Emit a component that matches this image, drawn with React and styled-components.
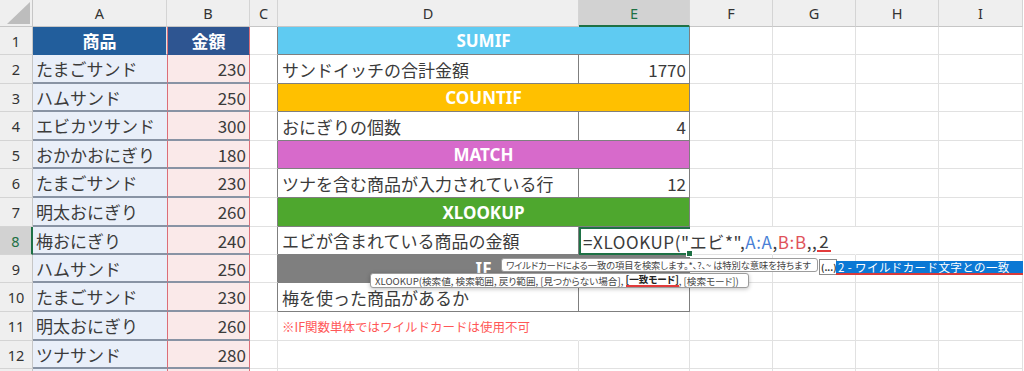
import React from 'react';
import styled, { createGlobalStyle } from 'styled-components';

const GlobalStyle = createGlobalStyle`
  html, body {
    margin: 0;
    padding: 0;
    background: #fff;
  }
  body {
    font-family: "Noto Sans CJK JP", "Noto Sans", sans-serif;
  }
`;

const COLS = ['A', 'B', 'C', 'D', 'E', 'F', 'G', 'H', 'I'];
const ROW_HEIGHTS = [28, 29, 28, 29, 28, 29, 29, 28, 28, 29, 29, 28];
const GREEN = '#1e7145';
const TABLE_LINE = '#7f7f7f';

const items = [
  ['たまごサンド', 230],
  ['ハムサンド', 250],
  ['エビカツサンド', 300],
  ['おかかおにぎり', 180],
  ['たまごサンド', 230],
  ['明太おにぎり', 260],
  ['梅おにぎり', 240],
  ['ハムサンド', 250],
  ['たまごサンド', 230],
  ['明太おにぎり', 260],
  ['ツナサンド', 280],
];

// D:E の表、行番号ごと
const table = {
  1: { head: 'SUMIF', bg: '#5fcbf2' },
  2: { label: 'サンドイッチの合計金額', value: '1770' },
  3: { head: 'COUNTIF', bg: '#ffc000' },
  4: { label: 'おにぎりの個数', value: '4' },
  5: { head: 'MATCH', bg: '#d76acb' },
  6: { label: 'ツナを含む商品が入力されている行', value: '12' },
  7: { head: 'XLOOKUP', bg: '#4ea72e' },
  8: { label: 'エビが含まれている商品の金額', edit: true },
  9: { head: 'IF', bg: '#7f7f7f' },
  10: { label: '梅を使った商品があるか', value: '' },
  11: { note: '※IF関数単体ではワイルドカードは使用不可' },
};

const Sheet = styled.div`
  position: relative;
  width: 1024px;
  height: 371px;
  overflow: hidden;
  display: grid;
  grid-template-columns: 33px 134px 83px 28px 301px 111px 83px 83px 83px 84px;
  grid-template-rows: 27px ${ROW_HEIGHTS.map((h) => `${h}px`).join(' ')} 20px;
  color: #3b3b3b;
`;

const Corner = styled.div`
  box-sizing: border-box;
  background: #efefef;
  border-right: 1px solid #c6c6c6;
  border-bottom: 1px solid #c6c6c6;

  svg {
    display: block;
  }
`;

const ColHead = styled.div`
  box-sizing: border-box;
  display: flex;
  align-items: center;
  justify-content: center;
  background: ${(p) => (p.$active ? '#d2d2d2' : '#efefef')};
  color: ${(p) => (p.$active ? GREEN : '#333')};
  border-right: 1px solid #d4d4d4;
  border-bottom: ${(p) => (p.$active ? `2px solid ${GREEN}` : '1px solid #c6c6c6')};
  font-family: "Noto Sans", sans-serif;
  font-size: 14.5px;
`;

const RowHead = styled.div`
  box-sizing: border-box;
  display: flex;
  align-items: center;
  justify-content: center;
  background: ${(p) => (p.$active ? '#d2d2d2' : '#efefef')};
  color: ${(p) => (p.$active ? GREEN : '#333')};
  border-right: ${(p) => (p.$active ? `2px solid ${GREEN}` : '1px solid #c6c6c6')};
  border-bottom: 1px solid #d4d4d4;
  font-family: "Noto Sans", sans-serif;
  font-size: 14.5px;
`;

const Cell = styled.div`
  box-sizing: border-box;
  display: flex;
  align-items: center;
  min-width: 0;
  padding: 0 3px;
  white-space: nowrap;
  font-size: 17px;
  background: #fff;
  border-right: 1px solid ${(p) => (p.$edge ? TABLE_LINE : p.$noRight ? '#fff' : '#e1e1e1')};
  border-bottom: 1px solid #e1e1e1;
`;

const ItemCell = styled(Cell)`
  background: #e9eff9;
  border-right: none;
  border-bottom: 2px solid #8893a4;
`;

const PriceCell = styled(Cell)`
  justify-content: flex-end;
  background: #fae9e9;
  border-left: 1px solid #dc6e78;
  border-right: 1px solid #dc6e78;
  border-bottom: 2px solid #8893a4;
`;

const TitleCell = styled(Cell)`
  justify-content: center;
  background: ${(p) => p.$bg};
  color: #fff;
  font-weight: bold;
  border-bottom: 1px solid ${(p) => p.$bg};
  ${(p) => p.$red && 'border-left: 1px solid #dc6e78; border-right: 1px solid #dc6e78;'}
`;

const FuncHead = styled(Cell)`
  grid-column: span 2;
  justify-content: center;
  background: ${(p) => p.$bg};
  color: #fff;
  font-family: "Noto Sans", "Noto Sans CJK JP", sans-serif;
  font-weight: bold;
  font-size: 17px;
  border-right: 1px solid ${TABLE_LINE};
  border-bottom: 1px solid ${TABLE_LINE};
`;

const LabelCell = styled(Cell)`
  padding-left: 4px;
  border-right: 1px solid ${TABLE_LINE};
  border-bottom: 1px solid ${TABLE_LINE};
`;

const ValueCell = styled(Cell)`
  justify-content: flex-end;
  border-right: 1px solid ${TABLE_LINE};
  border-bottom: 1px solid ${TABLE_LINE};
`;

const NoteCell = styled(Cell)`
  overflow: visible;
  color: #ff5757;
  font-size: 12.5px;
  padding-left: 4px;
  border-right-color: #fff;
  z-index: 1;
`;

const EditCell = styled(Cell)`
  position: relative;
  z-index: 2;
  overflow: visible;
  padding-left: 2px;
  border: 2px solid ${GREEN};
  border-right: none;
  font-family: "Noto Sans CJK JP", sans-serif;
  letter-spacing: 0.6px;

  &::after {
    content: '';
    position: absolute;
    right: -3px;
    bottom: -4px;
    width: 5px;
    height: 5px;
    background: ${GREEN};
    border: 1px solid #fff;
  }
`;

const Ref = styled.span`
  color: ${(p) => p.$color};
`;

const ArgMark = styled.span`
  border-bottom: 2px solid #e23b3b;
  line-height: 19px;
  padding: 0 2px;
`;

const Caret = styled.span`
  display: inline-block;
  width: 1px;
  height: 19px;
  background: #222;
`;

const Tip = styled.div`
  position: absolute;
  z-index: 5;
  box-sizing: border-box;
  display: flex;
  align-items: center;
  background: #fff;
  border: 1px solid #9c9c9c;
  border-radius: 3px;
  padding: 0 4px;
  color: #454545;
  white-space: nowrap;
  font-feature-settings: "palt";
`;

const HintTip = styled(Tip)`
  left: 501px;
  top: 258px;
  width: 317px;
  height: 14px;
  font-size: 9.3px;
  letter-spacing: -0.1px;
  overflow: hidden;
`;

const ArgTip = styled(Tip)`
  left: 370px;
  top: 273px;
  width: 379px;
  height: 15px;
  font-size: 9.6px;
  box-shadow: 0 1px 4px rgba(0, 0, 0, 0.25);
`;

const ArgBold = styled.b`
  color: #222;
  border-bottom: 2px solid #e23b3b;
  line-height: 11px;
`;

const MoreBox = styled(Tip)`
  left: 819px;
  top: 259px;
  width: 18px;
  height: 16px;
  padding: 0 1px;
  border-radius: 0;
  border-color: #8a8a8a;
  font-size: 9px;
  font-weight: bold;
  color: #333;
`;

const ModeItem = styled.div`
  position: absolute;
  z-index: 6;
  left: 836px;
  top: 261px;
  right: 1px;
  height: 14px;
  box-sizing: border-box;
  display: flex;
  align-items: center;
  padding-left: 2px;
  background: #0b78d4;
  border-bottom: 2px solid #d83a3a;
  color: #fff;
  font-size: 11.5px;
  letter-spacing: 0.4px;
  white-space: nowrap;
`;

const CornerMark = () => (
  <svg width="32" height="26" viewBox="0 0 32 26">
    <polygon points="7,24 30,24 30,2" fill="#bdbdbd" />
  </svg>
);

const Formula = () => (
  <>
    =XLOOKUP("エビ*",<Ref $color="#4a7fd6">A:A</Ref>,<Ref $color="#e0535a">B:B</Ref>,,
    <ArgMark>2</ArgMark>
    <Caret />
  </>
);

const TableCells = ({ row }) => {
  const t = table[row] || {};
  if (t.head) {
    return <FuncHead $bg={t.bg}>{t.head}</FuncHead>;
  }
  if (t.label !== undefined) {
    return (
      <>
        <LabelCell>{t.label}</LabelCell>
        {t.edit ? (
          <EditCell>
            <Formula />
          </EditCell>
        ) : (
          <ValueCell>{t.value}</ValueCell>
        )}
      </>
    );
  }
  if (t.note) {
    return (
      <>
        <NoteCell>{t.note}</NoteCell>
        <Cell />
      </>
    );
  }
  return (
    <>
      <Cell />
      <Cell />
    </>
  );
};

const SheetRow = ({ row }) => {
  const item = items[row - 2];
  const inTable = row <= 10;
  const editing = row === 8;
  return (
    <>
      {/* 13行目は下端に2pxしか見えないので番号は出さない */}
      <RowHead $active={editing}>{row <= 12 ? row : ''}</RowHead>
      {row === 1 ? (
        <>
          <TitleCell $bg="#225e9c">商品</TitleCell>
          <TitleCell $bg="#2e5591" $red>
            金額
          </TitleCell>
        </>
      ) : (
        <>
          <ItemCell>{item ? item[0] : ''}</ItemCell>
          <PriceCell>{item ? item[1] : ''}</PriceCell>
        </>
      )}
      <Cell $edge={inTable} />
      <TableCells row={row} />
      <Cell $noRight={editing} />
      <Cell $noRight={editing} />
      <Cell />
      <Cell />
    </>
  );
};

export default function App() {
  const rows = Array.from({ length: 13 }, (_, i) => i + 1);
  return (
    <>
      <GlobalStyle />
      <Sheet>
        <Corner>
          <CornerMark />
        </Corner>
        {COLS.map((c) => (
          <ColHead key={c} $active={c === 'E'}>
            {c}
          </ColHead>
        ))}
        {rows.map((r) => (
          <SheetRow key={r} row={r} />
        ))}

        <HintTip>ワイルドカードによる一致の項目を検索します。*、?、~ は特別な意味を持ちます</HintTip>
        <ArgTip>
          XLOOKUP(検索値, 検索範囲, 戻り範囲, [見つからない場合],&nbsp;<ArgBold>[一致モード]</ArgBold>, [検索モード])
        </ArgTip>
        <MoreBox>(...)</MoreBox>
        <ModeItem>2 - ワイルドカード文字との一致</ModeItem>
      </Sheet>
    </>
  );
}
